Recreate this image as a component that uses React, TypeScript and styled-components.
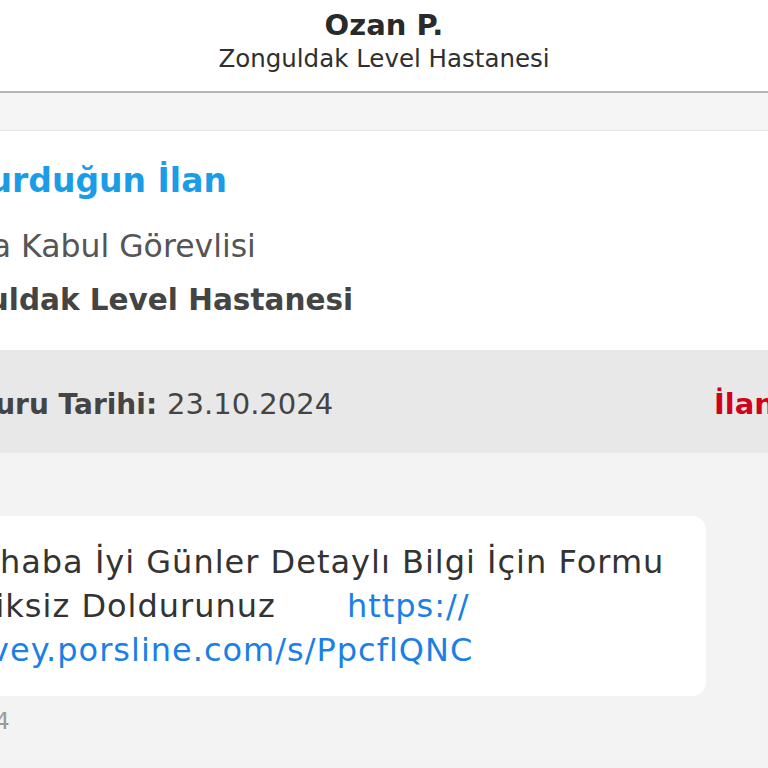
import styled, { createGlobalStyle } from 'styled-components';

const GlobalStyle = createGlobalStyle`
  html, body {
    margin: 0;
    padding: 0;
    background: #f3f3f3;
    font-family: 'DejaVu Sans', 'Noto Sans', sans-serif;
  }
`;

const Screen = styled.div`
  width: 768px;
  height: 768px;
  overflow: hidden;
  display: flex;
  flex-direction: column;
  background: #f3f3f3;
`;

const Header = styled.header`
  height: 93px;
  flex: 0 0 auto;
  background: #fff;
  border-bottom: 2px solid #b4b4b4;
  display: flex;
  flex-direction: column;
  align-items: center;
  justify-content: center;
  padding-bottom: 10px;
  box-sizing: border-box;
`;

const HeaderName = styled.div`
  font-size: 29px;
  font-weight: 700;
  color: #2a2a2a;
  line-height: 36px;
`;

const HeaderSub = styled.div`
  font-size: 24.5px;
  color: #2f2f2f;
  line-height: 32px;
`;

const Body = styled.div`
  flex: 1;
  overflow: hidden;
`;

// the content is wider than the window and scrolled a bit to the right
const Inner = styled.div`
  margin-left: -122px;
  width: 1100px;
`;

const TopGap = styled.div`
  height: 37px;
  background: #f5f5f5;
  border-bottom: 1px solid #e5e5e5;
`;

const Card = styled.section`
  background: #fff;
  height: 219px;
  padding: 28px 0 0 42px;
  box-sizing: border-box;
`;

const CardTitle = styled.div`
  font-size: 33px;
  font-weight: 700;
  color: #1a9de6;
  line-height: 44px;
  margin: 0 0 16px -20px;
`;

const CardLine = styled.div<{ $bold?: boolean; $indent?: number }>`
  font-size: ${(p) => (p.$bold ? '29.5px' : '31.5px')};
  font-weight: ${(p) => (p.$bold ? 700 : 400)};
  color: ${(p) => (p.$bold ? '#444' : '#555')};
  line-height: 54px;
  margin-left: ${(p) => p.$indent ?? 0}px;
`;

const InfoBar = styled.div`
  height: 103px;
  background: #e8e8e8;
  display: grid;
  grid-template-columns: 794px 1fr;
  align-items: center;
  padding: 4px 0 0 42px;
  box-sizing: border-box;
  font-size: 29px;
  color: #444;
`;

const InfoLabel = styled.span`
  font-size: 28px;
  font-weight: 700;
  margin-right: 10px;
`;

const Status = styled.span`
  font-weight: 700;
  color: #d0021b;
  white-space: nowrap;
`;

const Messages = styled.div`
  padding-top: 63px;
`;

const Bubble = styled.div`
  margin-left: 35px;
  width: 793px;
  box-sizing: border-box;
  background: #fff;
  border-radius: 14px;
  padding: 24px;
  font-size: 32px;
  letter-spacing: 1px;
  line-height: 44px;
  color: #333;
`;

const Link = styled.a<{ $gap?: number }>`
  color: #1a7fe6;
  text-decoration: none;
  margin-left: ${(p) => p.$gap ?? 0}px;
`;

const Time = styled.div`
  font-size: 23px;
  color: #9a9a9a;
  margin-top: 12px;
`;

export default function App() {
  return (
    <>
      <GlobalStyle />
      <Screen>
        <Header>
          <HeaderName>Ozan P.</HeaderName>
          <HeaderSub>Zonguldak Level Hastanesi</HeaderSub>
        </Header>
        <Body>
          <Inner>
            <TopGap />
            <Card>
              <CardTitle>Başvurduğun İlan</CardTitle>
              <CardLine>Hasta Kabul Görevlisi</CardLine>
              <CardLine $bold $indent={-16}>
                Zonguldak Level Hastanesi
              </CardLine>
            </Card>
            <InfoBar>
              <span>
                <InfoLabel>Başvuru Tarihi:</InfoLabel>23.10.2024
              </span>
              <Status>İlan Yayında</Status>
            </InfoBar>
            <Messages>
              <Bubble>
                Merhaba İyi Günler Detaylı Bilgi İçin Formu
                <br />
                Eksiksiz Doldurunuz
                <Link $gap={71}>https://</Link>
                <br />
                <Link>survey.porsline.com/s/PpcflQNC</Link>
              </Bubble>
              <Time>23.10.2024</Time>
            </Messages>
          </Inner>
        </Body>
      </Screen>
    </>
  );
}
